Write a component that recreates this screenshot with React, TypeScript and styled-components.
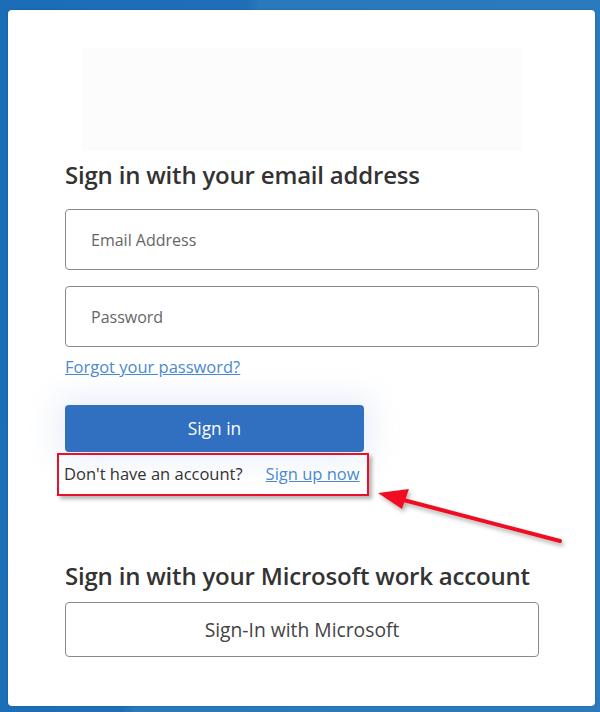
import styled, { createGlobalStyle } from 'styled-components'

const GlobalStyle = createGlobalStyle`
  html, body {
    margin: 0;
    padding: 0;
  }
  body {
    width: 600px;
    height: 712px;
    overflow: hidden;
    background: linear-gradient(100deg, #1b6db6 0%, #1e6fb7 34%, #2a79bd 36%, #2b7abe 100%);
    font-family: 'Open Sans', 'Noto Sans', sans-serif;
  }
`

const Page = styled.div`
  position: relative;
  box-sizing: border-box;
  height: 712px;
  padding: 10px 5px 6px 8px;
  display: flex;
`

const Card = styled.div`
  flex: 1;
  background: #fff;
  border-radius: 4px;
  box-shadow: 0 0 2px rgba(0, 0, 0, 0.25);
  padding: 38px 56px 0 57px;
  display: flex;
  flex-direction: column;
`

const LogoSlot = styled.div`
  width: 440px;
  height: 103px;
  margin: 0 auto;
  background: #fcfcfc;
`

const Heading = styled.h2<{ spacing: number }>`
  margin: ${({ spacing }) => spacing}px 0 0;
  font-size: 24px;
  font-weight: 600;
  color: #333;
  letter-spacing: -0.2px;
  line-height: 32px;
`

const Fields = styled.div`
  display: flex;
  flex-direction: column;
  gap: 16px;
  margin-top: 18px;
`

const Field = styled.div`
  box-sizing: border-box;
  height: 61px;
  border: 1px solid #8a8a8a;
  border-radius: 4px;
  padding: 0 25px;
  display: flex;
  align-items: center;
  font-size: 16px;
  color: #666;
`

const Link = styled.a`
  color: #4a8ad0;
  text-decoration: underline;
  font-size: 16.5px;
  cursor: pointer;
`

const ForgotRow = styled.div`
  margin-top: 9px;
  line-height: 22px;
`

const PrimaryButton = styled.button`
  margin-top: 27px;
  width: 299px;
  height: 47px;
  border: none;
  border-radius: 4px;
  background: #3170c1;
  color: #fff;
  font-family: inherit;
  font-size: 17.3px;
  box-shadow: 0 0 30px 8px rgba(120, 150, 210, 0.16);
`

const Annotated = styled.div`
  box-sizing: border-box;
  width: 312px;
  height: 43px;
  margin: 1px 0 0 -8px;
  padding: 0 4px 2px 5px;
  border: 2.5px solid #e8102a;
  box-shadow: 3px 3px 4px rgba(0, 0, 0, 0.3);
  display: flex;
  align-items: center;
  gap: 23px;
  font-size: 16.5px;
  color: #333;
`

const SecondaryButton = styled.button`
  margin-top: 10px;
  box-sizing: border-box;
  height: 55px;
  border: 1px solid #8a8a8a;
  border-radius: 4px;
  background: #fff;
  color: #444;
  font-family: inherit;
  font-size: 19.3px;
`

const Arrow = styled.svg`
  position: absolute;
  left: 0;
  top: 0;
  pointer-events: none;
`

const App = () => (
  <>
    <GlobalStyle />
    <Page>
      <Card>
        <LogoSlot />
        <Heading spacing={8}>Sign in with your email address</Heading>
        <Fields>
          <Field>Email Address</Field>
          <Field>Password</Field>
        </Fields>
        <ForgotRow>
          <Link>Forgot your password?</Link>
        </ForgotRow>
        <PrimaryButton>Sign in</PrimaryButton>
        <Annotated>
          <span>Don't have an account?</span>
          <Link>Sign up now</Link>
        </Annotated>
        <Heading spacing={64}>Sign in with your Microsoft work account</Heading>
        <SecondaryButton>Sign-In with Microsoft</SecondaryButton>
      </Card>
      <Arrow width="600" height="712" viewBox="0 0 600 712">
        <defs>
          <filter id="shade" x="-10%" y="-30%" width="130%" height="180%">
            <feDropShadow dx="2" dy="3" stdDeviation="2" floodColor="#000" floodOpacity="0.3" />
          </filter>
        </defs>
        <g filter="url(#shade)">
          <line x1="560" y1="541" x2="392" y2="497" stroke="#ee1122" strokeWidth="4" strokeLinecap="round" />
          <polygon points="378,493 409,489 402,509" fill="#ee1122" />
        </g>
      </Arrow>
    </Page>
  </>
)

export default App
